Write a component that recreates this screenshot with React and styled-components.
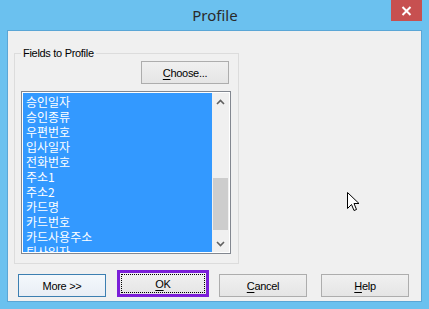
import styled, { createGlobalStyle } from "styled-components"

const GlobalStyle = createGlobalStyle`
  html, body {
    margin: 0;
    padding: 0;
    background: #f0f0f0;
  }
  * {
    box-sizing: border-box;
  }
`

const fields = [
    "승인일자",
    "승인종류",
    "우편번호",
    "입사일자",
    "전화번호",
    "주소1",
    "주소2",
    "카드명",
    "카드번호",
    "카드사용주소",
    "퇴사일자",
]

export default function App() {
    return (
        <>
            <GlobalStyle />
            <Window>
                <TitleBar>
                    <span />
                    <Title>Profile</Title>
                    <CloseButton>
                        <svg width="11" height="10" viewBox="0 0 11 10">
                            <path d="M1.5 1 L9.5 9 M9.5 1 L1.5 9" stroke="#fff" strokeWidth="2" />
                        </svg>
                    </CloseButton>
                </TitleBar>
                <Client>
                    <GroupBox>
                        <GroupLabel>Fields to Profile</GroupLabel>
                        <Button $mr={2}><u>C</u>hoose...</Button>
                        <ListBox>
                            <Items>
                                {fields.map((f) => (
                                    <Item key={f}>{f}</Item>
                                ))}
                            </Items>
                            <ScrollBar>
                                <Arrow>
                                    <svg width="9" height="6" viewBox="0 0 9 6">
                                        <path d="M1 5 L4.5 1.5 L8 5" fill="none" stroke="#606060" strokeWidth="1.6" />
                                    </svg>
                                </Arrow>
                                <Track>
                                    <Thumb $top={68} $height={52} />
                                </Track>
                                <Arrow>
                                    <svg width="9" height="6" viewBox="0 0 9 6">
                                        <path d="M1 1 L4.5 4.5 L8 1" fill="none" stroke="#606060" strokeWidth="1.6" />
                                    </svg>
                                </Arrow>
                            </ScrollBar>
                        </ListBox>
                    </GroupBox>
                    <ButtonRow>
                        <Button $default>More &gt;&gt;</Button>
                        <Button $focused $ml={11}>
                            <FocusRect><u>O</u>K</FocusRect>
                        </Button>
                        <Button $ml={10}><u>C</u>ancel</Button>
                        <Button $ml={14}><u>H</u>elp</Button>
                    </ButtonRow>
                    <Cursor>
                        <svg width="13" height="20" viewBox="0 0 13 20">
                            <path
                                d="M0.5 0.5 L0.5 16.5 L4.5 12.5 L7 18.5 L9.5 17.5 L7 11.5 L12 11.5 Z"
                                fill="#fff"
                                stroke="#000"
                                strokeWidth="1"
                                strokeLinejoin="miter"
                            />
                        </svg>
                    </Cursor>
                </Client>
            </Window>
        </>
    )
}

const Window = styled.div`
width: 429px;
height: 309px;
background-color: #6bc1ef;
display: flex;
flex-direction: column;
padding: 0 7px 7px 7px;
font-family: "Liberation Sans", Arial, sans-serif;
`
const TitleBar = styled.div`
height: 30px;
display: grid;
grid-template-columns: 1fr auto 1fr;
align-items: start;
`
const Title = styled.div`
font-family: "Noto Sans", "Open Sans", sans-serif;
font-size: 15px;
color: #2a2a2a;
line-height: 30px;
padding-left: 1px;
`
const CloseButton = styled.div`
justify-self: end;
width: 31px;
height: 21px;
background-color: #c75050;
display: flex;
align-items: center;
justify-content: center;
`
const Client = styled.div`
position: relative;
flex: 1;
background-color: #f0f0f0;
border: 1px solid #5aa6d6;
padding: 22px 0 4px 6px;
display: flex;
flex-direction: column;
`
const GroupBox = styled.div`
position: relative;
width: 225px;
height: 211px;
border: 1px solid #dcdcdc;
display: flex;
flex-direction: column;
align-items: flex-end;
padding: 7px 7px 0 5px;
gap: 7px;
`
const GroupLabel = styled.div`
position: absolute;
top: -8px;
left: 6px;
padding: 0 2px 0 2px;
background-color: #f0f0f0;
font-size: 11px;
letter-spacing: -0.3px;
line-height: 14px;
color: #000;
`
const Button = styled.div`
width: ${(p) => (p.$focused ? "92px" : "88px")};
height: ${(p) => (p.$focused ? "27px" : "23px")};
margin-left: ${(p) => p.$ml || 0}px;
margin-right: ${(p) => p.$mr || 0}px;
border: ${(p) =>
    p.$focused ? "3px solid #7b1fd8" : p.$default ? "1px solid #3c7fb1" : "1px solid #adadad"};
background: ${(p) =>
    p.$default ? "linear-gradient(#f4f8fc, #e8eef5)" : "linear-gradient(#f0f0f0, #e5e5e5)"};
display: flex;
align-items: center;
justify-content: center;
font-size: 11px;
letter-spacing: -0.3px;
color: #000;
padding: ${(p) => (p.$focused ? "1px" : "0")};
u {
    text-decoration-thickness: 1px;
    text-underline-offset: 2px;
}
`
const FocusRect = styled.div`
width: 100%;
height: 100%;
border: 1px dotted #000;
display: flex;
align-items: center;
justify-content: center;
`
const ListBox = styled.div`
width: 210px;
height: 163px;
border: 1px solid #828790;
background-color: #fff;
padding: 1px;
display: flex;
`
const Items = styled.div`
flex: 1;
overflow: hidden;
background-color: #3399ff;
padding-top: 1px;
`
const Item = styled.div`
height: 15px;
line-height: 15px;
padding-left: 3px;
font-family: "Noto Sans CJK KR", "Liberation Sans", sans-serif;
font-size: 12px;
color: #fff;
white-space: nowrap;
`
const ScrollBar = styled.div`
width: 17px;
background-color: #f0f0f0;
display: flex;
flex-direction: column;
`
const Arrow = styled.div`
height: 17px;
display: flex;
align-items: center;
justify-content: center;
`
const Track = styled.div`
flex: 1;
padding: 0 1px;
`
const Thumb = styled.div`
margin-top: ${(p) => p.$top}px;
height: ${(p) => p.$height}px;
background-color: #cdcdcd;
`
const ButtonRow = styled.div`
margin-top: 6px;
padding-left: 4px;
display: flex;
align-items: flex-end;
`
const Cursor = styled.div`
position: absolute;
left: 339px;
top: 161px;
line-height: 0;
`
